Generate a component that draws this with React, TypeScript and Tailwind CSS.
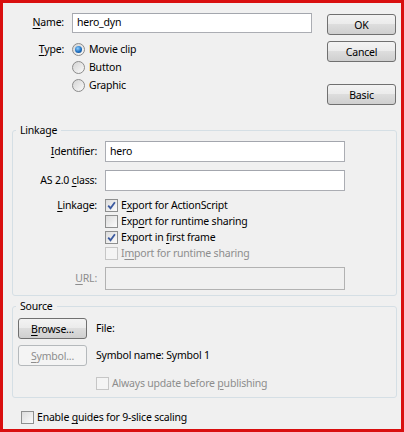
import React from "react";

const U = ({ children }: { children: React.ReactNode }) => (
  <span className="underline underline-offset-[2px] decoration-[1px]">{children}</span>
);

function Radio({ checked, label }: { checked?: boolean; label: React.ReactNode }) {
  return (
    <div className="flex items-center h-[18px]">
      <div className="w-[13px] h-[13px] rounded-full border border-[#8b8b8b] bg-gradient-to-br from-[#d4d4d4] to-[#fafafa] flex items-center justify-center">
        {checked && (
          <div className="w-[7px] h-[7px] rounded-full bg-[radial-gradient(circle_at_40%_35%,#8fd0ff_0%,#1f6fc0_55%,#0b3f7a_100%)]" />
        )}
      </div>
      <span className="ml-[4px] leading-[16px]">{label}</span>
    </div>
  );
}

function Check({ checked, disabled, label }: { checked?: boolean; disabled?: boolean; label: React.ReactNode }) {
  return (
    <div className="flex items-center h-[16px]">
      <div
        className={
          "w-[13px] h-[13px] border flex items-center justify-center " +
          (disabled
            ? "border-[#c6c6c6] bg-[#f4f4f4]"
            : "border-[#8e8f8f] bg-gradient-to-br from-[#dcdcdc] to-[#fbfbfb]")
        }
      >
        {checked && (
          <svg width="9" height="9" viewBox="0 0 9 9">
            <path d="M1.2 4.6 L3.5 7.2 L7.9 1.2" fill="none" stroke="#3b5aa0" strokeWidth="1.8" />
          </svg>
        )}
      </div>
      <span className={"ml-[3px] leading-[16px] " + (disabled ? "text-[#8d8d8d]" : "")}>{label}</span>
    </div>
  );
}

function Btn({ children, disabled, className = "" }: { children: React.ReactNode; disabled?: boolean; className?: string }) {
  return (
    <div
      className={
        "w-[69px] h-[21px] rounded-[3px] border flex items-center justify-center leading-[16px] " +
        (disabled
          ? "border-[#b5b9bc] bg-[#f4f4f4] text-[#8d8d8d] "
          : "border-[#707070] bg-[linear-gradient(#f3f3f3_0%,#ebebeb_48%,#dddddd_50%,#cfcfcf_100%)] ") +
        className
      }
    >
      {children}
    </div>
  );
}

function Input({ value, disabled, className = "" }: { value?: string; disabled?: boolean; className?: string }) {
  return (
    <div
      className={
        "w-[240px] border flex items-center pl-[4px] " +
        (disabled ? "border-[#b2b2b2] bg-[#f0f0f0]" : "border-[#abadb3] border-t-[#a3a6ad] bg-white") +
        " " +
        className
      }
    >
      {value}
    </div>
  );
}

export default function App() {
  return (
    <div className="w-[404px] h-[432px] border-[3px] border-[#d90f0f] bg-[#f0f0f0] flex flex-col text-[10.5px] tracking-[-0.2px] text-black overflow-hidden font-['Noto_Sans',sans-serif]">
      {/* Top section */}
      <div className="flex pt-[10px] pr-[5px]">
        <div className="flex-1">
          <div className="flex items-center">
            <div className="w-[61px] text-right">
              <U>N</U>ame:
            </div>
            <Input value="hero_dyn" className="ml-[8px] h-[20px]" />
          </div>
          <div className="flex mt-[7px]">
            <div className="w-[61px] text-right leading-[18px]">
              <U>T</U>ype:
            </div>
            <div className="ml-[8px] flex flex-col">
              <Radio checked label="Movie clip" />
              <Radio label="Button" />
              <Radio label="Graphic" />
            </div>
          </div>
        </div>
        <div className="flex flex-col pt-[1px]">
          <Btn>OK</Btn>
          <Btn className="mt-[6px]">Cancel</Btn>
          <Btn className="mt-[22px]">Basic</Btn>
        </div>
      </div>

      {/* Linkage */}
      <fieldset className="mt-[17px] ml-[9px] mr-[4px] border border-[#d5dfe5] rounded-[3px] pb-[5px]">
        <legend className="ml-[3px] px-[4px] leading-[16px]">Linkage</legend>
        <div className="flex flex-col pt-[3px]">
          <div className="flex items-center">
            <div className="w-[84px] text-right">
              <U>I</U>dentifier:
            </div>
            <Input value="hero" className="ml-[8px] h-[21px]" />
          </div>
          <div className="flex items-center mt-[8px]">
            <div className="w-[84px] text-right">
              AS 2.0 <U>c</U>lass:
            </div>
            <Input className="ml-[8px] h-[21px]" />
          </div>
          <div className="flex mt-[6px]">
            <div className="w-[84px] text-right leading-[16px]">
              <U>L</U>inkage:
            </div>
            <div className="ml-[8px] flex flex-col">
              <Check checked label={<>E<U>x</U>port for ActionScript</>} />
              <Check label={<>Exp<U>o</U>rt for runtime sharing</>} />
              <Check checked label={<>Export in <U>f</U>irst frame</>} />
              <Check disabled label={<>I<U>m</U>port for runtime sharing</>} />
            </div>
          </div>
          <div className="flex items-center mt-[6px]">
            <div className="w-[84px] text-right text-[#8d8d8d]">
              <U>U</U>RL:
            </div>
            <Input disabled className="ml-[8px] h-[23px]" />
          </div>
        </div>
      </fieldset>

      {/* Source */}
      <fieldset className="mt-[2px] ml-[9px] mr-[4px] border border-[#d5dfe5] rounded-[3px] pb-[6px]">
        <legend className="ml-[3px] px-[4px] leading-[16px]">Source</legend>
        <div className="flex flex-col pt-[4px] pl-[5px]">
          <div className="flex items-center">
            <Btn>
              <span>
                <U>B</U>rowse...
              </span>
            </Btn>
            <span className="ml-[9px]">File:</span>
          </div>
          <div className="flex items-center mt-[6px]">
            <Btn disabled>
              <span>
                <U>S</U>ymbol...
              </span>
            </Btn>
            <span className="ml-[9px]">Symbol name: Symbol 1</span>
          </div>
          <div className="ml-[78px] mt-[9px]">
            <Check disabled label={<>Always update before <U>p</U>ublishing</>} />
          </div>
        </div>
      </fieldset>

      <div className="ml-[18px] mt-[11px]">
        <Check label={<>Enable <U>g</U>uides for 9-slice scaling</>} />
      </div>
    </div>
  );
}
